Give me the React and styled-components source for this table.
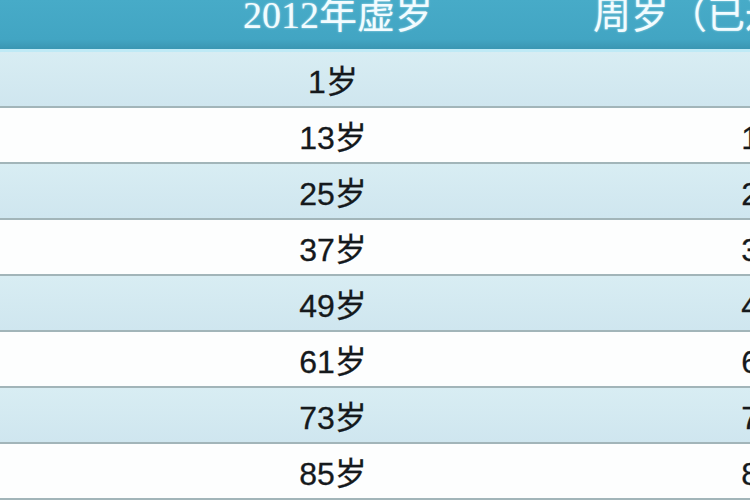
import React from "react";
import styled, { createGlobalStyle } from "styled-components";

// rows of the 2012 age table: 虚岁 and 周岁
const rows = [
  { xu: "1岁", zhou: "0岁" },
  { xu: "13岁", zhou: "12岁" },
  { xu: "25岁", zhou: "24岁" },
  { xu: "37岁", zhou: "36岁" },
  { xu: "49岁", zhou: "48岁" },
  { xu: "61岁", zhou: "60岁" },
  { xu: "73岁", zhou: "72岁" },
  { xu: "85岁", zhou: "84岁" },
];

const App = () => {
  return (
    <>
      <GlobalStyle />
      <Table>
        <HeaderRow>
          <HeadCell>2012年虚岁</HeadCell>
          <HeadCell left>周岁（已过生日）</HeadCell>
        </HeaderRow>
        {rows.map((r, i) => (
          <Row key={r.xu} shaded={i % 2 === 0}>
            <FirstCell>{r.xu}</FirstCell>
            <Cell>{r.zhou}</Cell>
          </Row>
        ))}
      </Table>
    </>
  );
};

const GlobalStyle = createGlobalStyle`
html, body {
  margin: 0;
  padding: 0;
  width: 750px;
  height: 500px;
  overflow: hidden;
  background: #fdfefe;
}
`;

const Table = styled.div`
width: 970px;
display: flex;
flex-direction: column;
`;

const HeaderRow = styled.div`
display: grid;
grid-template-columns: 580px 390px;
height: 49px;
background: linear-gradient(#47abc8, #42a5c3 80%, #3a96b2);
border-bottom: 3px solid #bfeaf6;
overflow: hidden;
`;

const HeadCell = styled.div`
font-family: "Liberation Serif", "Noto Sans CJK SC", serif;
font-size: 38px;
line-height: 30px;
color: #f2fcff;
text-shadow: 0 0 2px #c4f3ff, 0 0 1px #2c7f96;
white-space: nowrap;
text-align: ${(p) => (p.left ? "left" : "center")};
padding-left: ${(p) => (p.left ? "13px" : "96px")};
`;

const Row = styled.div`
display: grid;
grid-template-columns: 580px 390px;
height: 54px;
align-items: center;
background: ${(p) => (p.shaded ? "linear-gradient(#d8edf3, #cfe6ef)" : "#fdfefe")};
border-bottom: 2px solid #a2b5b9;
font-family: "Liberation Sans", "Noto Sans CJK SC", sans-serif;
font-size: 32px;
color: #15191c;
`;

const Cell = styled.div`
text-align: center;
white-space: nowrap;
-webkit-text-stroke: 0.3px #15191c;
`;

const FirstCell = styled(Cell)`
padding-left: 86px;
`;

export default App;
